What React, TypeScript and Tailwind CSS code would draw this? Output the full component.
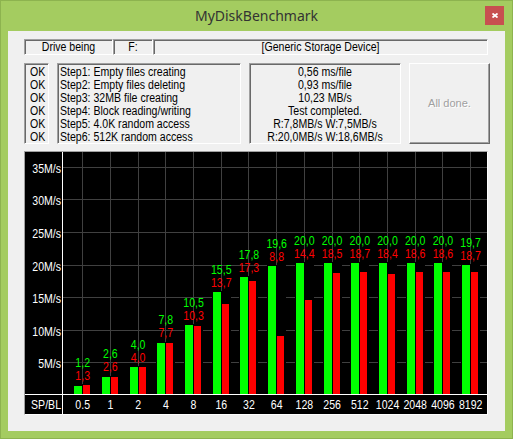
import React from 'react';

const SIZES = ['0.5', '1', '2', '4', '8', '16', '32', '64', '128', '256', '512', '1024', '2048', '4096', '8192'];
const READS = [1.2, 2.6, 4.0, 7.8, 10.5, 15.5, 17.8, 19.6, 20.0, 20.0, 20.0, 20.0, 20.0, 20.0, 19.7];
const WRITES = [1.3, 2.6, 4.0, 7.7, 10.3, 13.7, 17.3, 8.8, 14.4, 18.5, 18.7, 18.4, 18.6, 18.6, 18.7];

const STEPS = [
  'Step1: Empty files creating',
  'Step2: Empty files deleting',
  'Step3: 32MB file creating',
  'Step4: Block reading/writing',
  'Step5: 4.0K random access',
  'Step6: 512K random access',
];

const RESULTS = [
  '0,56 ms/file',
  '0,93 ms/file',
  '10,23 MB/s',
  'Test completed.',
  'R:7,8MB/s W:7,5MB/s',
  'R:20,0MB/s W:18,6MB/s',
];

// sunken win32 static edge
const sunken =
  'border border-t-[#a0a0a0] border-l-[#a0a0a0] border-r-white border-b-white shadow-[inset_1px_1px_0_#696969]';

const fmt = (v: number) => v.toFixed(1).replace('.', ',');

// chart geometry, in window pixels (svg viewBox matches the chart's inner box)
const BASE = 393.5;
const PX_PER_MB = 6.52;
const colX = (i: number) => 82.7 + 27.71 * i;
const gridY = (k: number) => Math.round(395 - 32.6 * k) + 0.5;

const Label: React.FC<{ x: number; y: number; fill: string; anchor?: 'middle' | 'end' | 'start'; children: React.ReactNode }> = ({
  x,
  y,
  fill,
  anchor = 'middle',
  children,
}) => (
  <text
    transform={`translate(${x} ${y + 4.3}) scale(0.88 1)`}
    textAnchor={anchor}
    fill={fill}
    fontSize={12}
    fontFamily="'Liberation Sans', Arial, sans-serif"
  >
    {children}
  </text>
);

const Chart: React.FC = () => (
  <div className={`w-[464px] h-[264px] bg-black ${sunken} shadow-none`}>
    <svg width={462} height={262} viewBox="25 152 462 262" shapeRendering="crispEdges" className="block">
      {/* horizontal grid */}
      {[1, 2, 3, 4, 5, 6, 7].map((k) => (
        <line key={k} x1={63} x2={487} y1={gridY(k)} y2={gridY(k)} stroke="#404040" strokeWidth={1} />
      ))}
      {/* vertical grid */}
      {SIZES.map((_, i) => {
        const x = Math.floor(colX(i)) + 0.5;
        return <line key={i} x1={x} x2={x} y1={152} y2={394} stroke="#404040" strokeWidth={1} />;
      })}
      {/* axes */}
      <line x1={62.5} x2={62.5} y1={152} y2={414} stroke="#fff" strokeWidth={1} />
      <line x1={25} x2={487} y1={394.5} y2={394.5} stroke="#fff" strokeWidth={1} />

      {/* y labels */}
      {[1, 2, 3, 4, 5, 6, 7].map((k) => (
        <Label key={k} x={61} y={gridY(k) + 1} fill="#fff" anchor="end">
          {`${k * 5}M/s`}
        </Label>
      ))}

      {/* bars + values */}
      {SIZES.map((_, i) => {
        const fl = Math.floor(colX(i));
        const gTop = BASE - READS[i] * PX_PER_MB;
        const rTop = BASE - WRITES[i] * PX_PER_MB;
        const top = Math.min(gTop, rTop);
        const redY = top - 9.5;
        return (
          <g key={i}>
            <rect x={fl - 9} y={Math.round(top) - 1} width={19} height={394 - Math.round(top) + 1} fill="#000" />
            <rect x={fl - 8} y={Math.round(gTop)} width={8} height={394 - Math.round(gTop)} fill="#00ff00" />
            <rect x={fl + 1} y={Math.round(rTop)} width={7} height={394 - Math.round(rTop)} fill="#ff0000" />
            <Label x={colX(i)} y={redY - 13} fill="#00ff00">
              {fmt(READS[i])}
            </Label>
            <Label x={colX(i)} y={redY} fill="#ff0000">
              {fmt(WRITES[i])}
            </Label>
          </g>
        );
      })}

      {/* x labels */}
      <Label x={61} y={404.5} fill="#fff" anchor="end">
        SP/BL
      </Label>
      {SIZES.map((s, i) => (
        <Label key={s} x={colX(i)} y={404.5} fill="#fff">
          {s}
        </Label>
      ))}
    </svg>
  </div>
);

export default function App() {
  return (
    <div className="w-[513px] h-[439px] bg-[#a4cc60] border border-[#8db34f] flex flex-col font-['Liberation_Sans',Arial,sans-serif] text-black">
      {/* title bar */}
      <div className="relative h-[30px] flex items-center justify-center shrink-0">
        <span className="font-['Noto_Sans',sans-serif] text-[14px] text-[#333] leading-none -mt-[1px]">MyDiskBenchmark</span>
        <div className="absolute right-[8px] top-[5px] w-[19px] h-[19px] bg-[#c75050] flex items-center justify-center">
          <svg width="6" height="5" viewBox="0 0 6 5">
            <path d="M0.5 0.5 L5.5 4.5 M5.5 0.5 L0.5 4.5" stroke="#fff" strokeWidth="1.8" />
          </svg>
        </div>
      </div>

      {/* client area */}
      <div className="flex-1 mx-[7px] mb-[7px] bg-[#f0f0f0] pt-[8px] pl-[16px] text-[12px]">
        <div className="flex h-[16px] w-[464px] leading-[14px]">
          <div className={`w-[89px] text-center ${sunken}`}>
            <div className="scale-x-[0.88]">Drive being</div>
          </div>
          <div className={`w-[40px] text-center ${sunken}`}>
            <div className="scale-x-[0.88]">F:</div>
          </div>
          <div className={`flex-1 text-center ${sunken}`}>
            <div className="scale-x-[0.88]">[Generic Storage Device]</div>
          </div>
        </div>

        <div className="flex mt-[8px] h-[81px] gap-[8px] leading-[13px]">
          <div className={`w-[25px] pl-[5px] pt-[2px] ${sunken}`}>
            <div className="origin-left scale-x-[0.88]">
              {STEPS.map((s) => (
                <div key={s}>OK</div>
              ))}
            </div>
          </div>
          <div className={`w-[184px] pl-[2px] pt-[2px] ${sunken}`}>
            <div className="origin-left scale-x-[0.88]">
              {STEPS.map((s) => (
                <div key={s} className="whitespace-nowrap">
                  {s}
                </div>
              ))}
            </div>
          </div>
          <div className={`w-[152px] pt-[2px] text-center ${sunken}`}>
            <div className="scale-x-[0.88]">
              {RESULTS.map((r) => (
                <div key={r} className="whitespace-nowrap">
                  {r}
                </div>
              ))}
            </div>
          </div>
          <div className="w-[81px] border border-t-white border-l-white border-r-[#696969] border-b-[#696969] shadow-[inset_-1px_-1px_0_#a0a0a0] flex items-center justify-center">
            <span className="text-[#a0a0a0] [text-shadow:1px_1px_0_#fff] text-[11px]">All done.</span>
          </div>
        </div>

        <div className="mt-[7px]">
          <Chart />
        </div>
      </div>
    </div>
  );
}
